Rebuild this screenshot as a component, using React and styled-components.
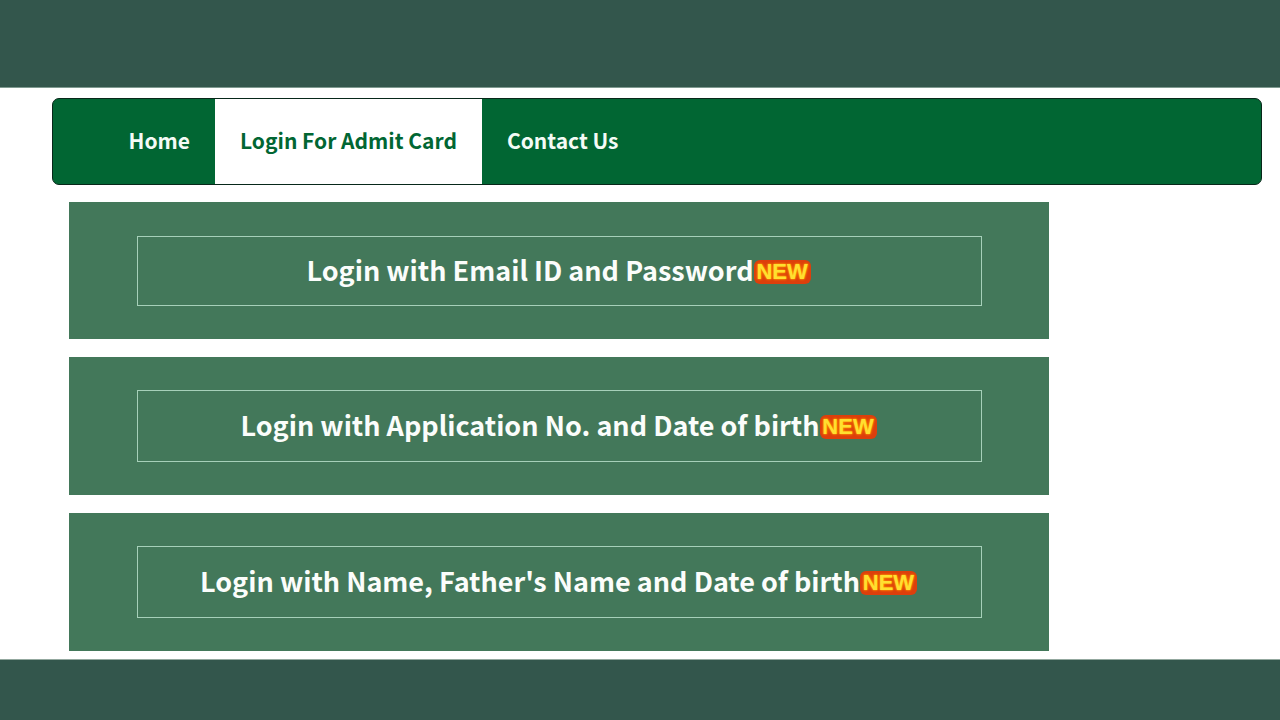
import React from 'react';
import styled, { createGlobalStyle } from 'styled-components';

const GlobalStyle = createGlobalStyle`
  html, body {
    margin: 0;
    padding: 0;
    background: #ffffff;
    font-family: "Noto Sans CJK SC", "Noto Sans", sans-serif;
  }
`;

const Page = styled.div`
  width: 1280px;
  height: 720px;
  overflow: hidden;
  display: flex;
  flex-direction: column;
`;

const TopBar = styled.header`
  height: 87px;
  flex: none;
  background: #33564c;
  border-bottom: 1px solid #7f9a90;
  box-sizing: content-box;
`;

const Content = styled.main`
  flex: 1;
  padding: 10px 18px 0 52px;
`;

const Nav = styled.nav`
  height: 87px;
  box-sizing: border-box;
  display: flex;
  padding-left: 50.5px;
  background: #016633;
  border: 1px solid #08281a;
  border-radius: 7px;
`;

const NavItem = styled.a`
  display: flex;
  align-items: center;
  padding: 0 25px 4px;
  font-size: 21px;
  font-weight: 700;
  color: ${(p) => (p.$active ? '#016633' : '#f4fbf6')};
  background: ${(p) => (p.$active ? '#ffffff' : 'transparent')};
`;

const CardList = styled.div`
  display: flex;
  flex-direction: column;
  gap: 18px;
  width: 980px;
  margin: 17px 0 0 17px;
`;

const Card = styled.section`
  height: ${(p) => p.$height}px;
  box-sizing: border-box;
  padding: ${(p) => p.$top}px 67px 0 68px;
  background: #43785a;
`;

const LoginLink = styled.a`
  height: ${(p) => p.$height}px;
  box-sizing: border-box;
  display: flex;
  align-items: center;
  justify-content: center;
  padding: 0 2px 4px 0;
  border: 1px solid #a6d0b9;
  font-size: 27px;
  font-weight: 700;
  color: #fbfdfb;
`;

const NewBadge = styled.span`
  display: inline-flex;
  align-items: center;
  justify-content: center;
  width: 57px;
  height: 24px;
  margin-top: 5px;
  border-radius: 6px;
  background: #dd3f0c;
  font-family: "Liberation Sans", sans-serif;
  font-size: 22px;
  font-weight: 700;
  color: #ffdf30;
  text-shadow: 0 0 3px #ff9000, 0 0 2px #ff9000, 0 0 1px #ff9000;
`;

const BottomBar = styled.footer`
  height: 61px;
  flex: none;
  background: #33564c;
  border-top: 1px solid #93a89f;
  box-sizing: border-box;
`;

const logins = [
  { label: 'Login with Email ID and Password', card: 137, top: 34, link: 70 },
  { label: 'Login with Application No. and Date of birth', card: 138, top: 33, link: 72 },
  { label: "Login with Name, Father's Name and Date of birth", card: 138, top: 33, link: 72 },
];

export default function App() {
  return (
    <Page>
      <GlobalStyle />
      <TopBar />
      <Content>
        <Nav>
          <NavItem>Home</NavItem>
          <NavItem $active>Login For Admit Card</NavItem>
          <NavItem>Contact Us</NavItem>
        </Nav>
        <CardList>
          {logins.map((item) => (
            <Card key={item.label} $height={item.card} $top={item.top}>
              <LoginLink $height={item.link}>
                {item.label}
                <NewBadge>NEW</NewBadge>
              </LoginLink>
            </Card>
          ))}
        </CardList>
      </Content>
      <BottomBar />
    </Page>
  );
}
